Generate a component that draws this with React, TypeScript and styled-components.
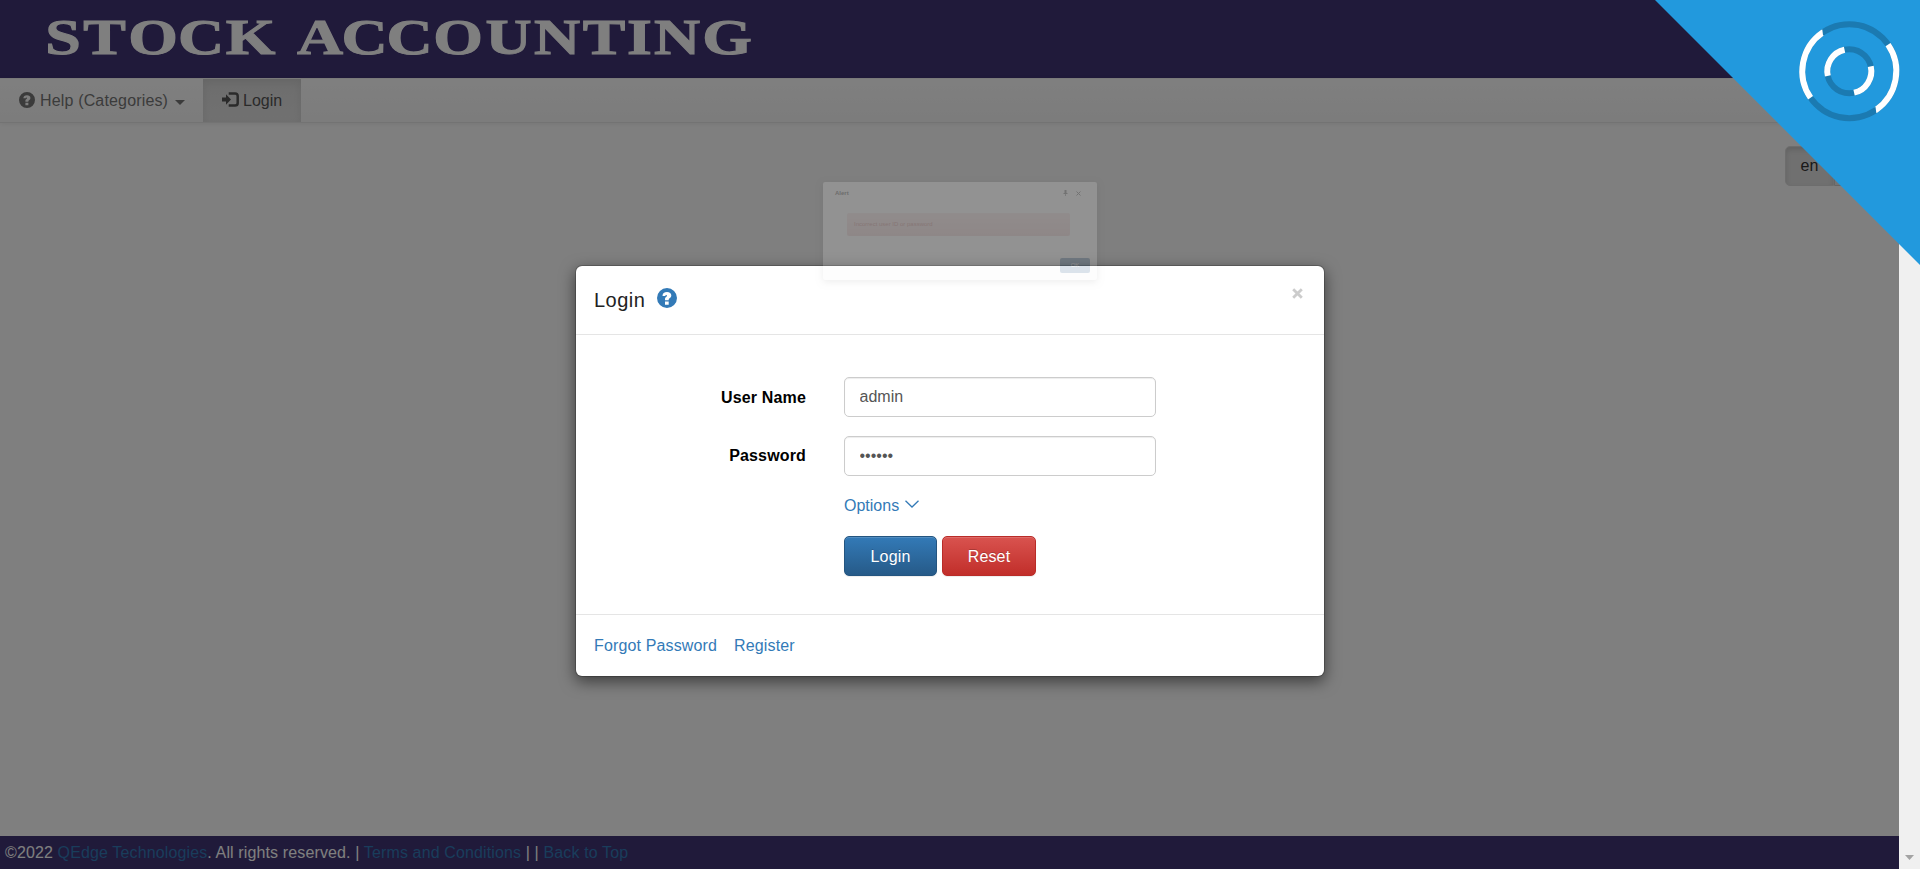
import React from "react";
import styled, { createGlobalStyle } from "styled-components";

const Global = createGlobalStyle`
  * { box-sizing: border-box; }
  html, body { margin: 0; padding: 0; overflow: hidden; }
  body {
    font-family: "Liberation Sans", Arial, Helvetica, sans-serif;
    font-size: 16px;
    line-height: 22px;
    color: #222;
    background: #fff;
  }
`;

const Screen = styled.div`
  position: relative;
  display: flex;
  width: 1920px;
  height: 869px;
  overflow: hidden;
`;

const Page = styled.div`
  position: relative;
  display: flex;
  flex-direction: column;
  width: 1899px;
  height: 869px;
  overflow: hidden;
`;

const Header = styled.header`
  height: 78px;
  background: #403474;
  svg { display: block; }
`;

const LogoText = styled.text`
  font-family: "Liberation Serif", "Times New Roman", serif;
  font-weight: bold;
  font-size: 51.5px;
  fill: #fff;
  stroke: #fff;
  stroke-width: 1px;
  text-anchor: middle;
`;

const Navbar = styled.nav`
  display: flex;
  height: 45px;
  border-top: 1px solid #f4f4f4;
  border-bottom: 1px solid #e7e7e7;
  background: linear-gradient(to bottom, #fff 0%, #f8f8f8 100%);
  box-shadow: 0 1px 5px rgba(0, 0, 0, 0.075);
`;

const NavItem = styled.a<{ $active?: boolean; $width: number }>`
  display: flex;
  align-items: center;
  width: ${(p) => p.$width}px;
  padding-left: 19px;
  color: ${(p) => (p.$active ? "#555" : "#777")};
  background: ${(p) => (p.$active ? "linear-gradient(to bottom, #dbdbdb, #e2e2e2)" : "none")};
  box-shadow: ${(p) => (p.$active ? "inset 0 3px 9px rgba(0,0,0,.075)" : "none")};
  letter-spacing: ${(p) => (p.$active ? "0" : "0.16px")};
  span { padding-top: 1px; }
  svg { margin-bottom: 2px; flex: none; }
`;

const Caret = styled.i`
  margin-left: 7px;
  margin-top: 3px;
  border: 5px solid transparent;
  border-top-color: #777;
  border-bottom: 0;
`;

const Main = styled.main`
  flex: 1;
  display: flex;
  justify-content: flex-end;
  align-items: flex-start;
  padding: 23px 16px 0 0;
`;

const ButtonGroup = styled.div`
  display: flex;
  height: 40px;
`;

const LangButton = styled.button<{ $pressed?: boolean; $width: number }>`
  width: ${(p) => p.$width}px;
  padding: 0 0 1px;
  font: inherit;
  color: #333;
  border: 1px solid ${(p) => (p.$pressed ? "#dbdbdb" : "#ccc")};
  border-radius: ${(p) => (p.$pressed ? "5px 0 0 5px" : "0 5px 5px 0")};
  background: ${(p) => (p.$pressed ? "#e0e0e0" : "#e8e8e8")};
  box-shadow: ${(p) => (p.$pressed ? "inset 0 3px 5px rgba(0,0,0,.125)" : "none")};
`;

const Footer = styled.footer`
  height: 33px;
  padding: 6px 4px 0 5px;
  background: #403474;
  color: #fff;
  white-space: pre;
  letter-spacing: 0.13px;
  a { color: #337ab7; }
`;

const Backdrop = styled.div`
  position: absolute;
  inset: 0;
  padding-top: 265px;
  background: rgba(0, 0, 0, 0.5);
`;

const Dialog = styled.section`
  display: flex;
  flex-direction: column;
  width: 750px;
  height: 412px;
  margin: 0 0 0 575px;
  border: 1px solid rgba(0, 0, 0, 0.2);
  border-radius: 7px;
  background: #fff;
  background-clip: padding-box;
  box-shadow: 0 5px 15px rgba(0, 0, 0, 0.5);
`;

const DialogHeader = styled.div`
  display: flex;
  height: 69px;
  padding: 21px 21px 0 18px;
  border-bottom: 1px solid #e5e5e5;
`;

const Title = styled.h4`
  margin: 0 12px 0 0;
  font-size: 20px;
  line-height: 26px;
  font-weight: 400;
  letter-spacing: 0.5px;
  color: #222;
`;

const HelpLink = styled.a`
  padding-top: 1px;
  line-height: 0;
`;

const Close = styled.svg`
  flex: none;
  margin: 1px 0 0 auto;
`;

const DialogBody = styled.form`
  flex: 1;
  padding-top: 42px;
`;

const Field = styled.label`
  display: flex;
  align-items: center;
  height: 40px;
  margin-bottom: 19px;
`;

const Label = styled.span<{ $drop?: number }>`
  width: 230px;
  margin-right: 38px;
  padding-top: ${(p) => p.$drop || 0}px;
  text-align: right;
  font-weight: 700;
  letter-spacing: 0.15px;
  color: #000;
`;

const Input = styled.input`
  width: 312px;
  height: 40px;
  padding: 5px 15px 5px 14.5px;
  font: inherit;
  color: #555;
  border: 1px solid #ccc;
  border-radius: 5px;
  outline: none;
  background: #fff;
  box-shadow: inset 0 1px 1px rgba(0, 0, 0, 0.075);
`;

const Options = styled.div`
  display: flex;
  align-items: center;
  height: 22px;
  margin-left: 268px;
  color: #337ab7;
  svg { margin: 0 0 4px 6px; }
`;

const Actions = styled.div`
  display: flex;
  gap: 5px;
  margin: 19px 0 0 268px;
`;

const Action = styled.button<{ $from: string; $to: string; $edge: string; $width: number }>`
  width: ${(p) => p.$width}px;
  height: 40px;
  padding: 1px 0 0;
  font: inherit;
  letter-spacing: 0.15px;
  color: #fff;
  border: 1px solid ${(p) => p.$edge};
  border-radius: 5px;
  background: linear-gradient(to bottom, ${(p) => p.$from}, ${(p) => p.$to});
  box-shadow: inset 0 1px 0 rgba(255, 255, 255, 0.15), 0 1px 1px rgba(0, 0, 0, 0.075);
  text-shadow: 0 -1px 0 rgba(0, 0, 0, 0.2);
`;

const DialogFooter = styled.div`
  display: flex;
  gap: 17px;
  height: 62px;
  padding: 20px 18px 0;
  border-top: 1px solid #e5e5e5;
  color: #337ab7;
  letter-spacing: 0.14px;
`;

const Alert = styled.div`
  position: absolute;
  left: 823px;
  top: 182px;
  display: flex;
  flex-direction: column;
  width: 274px;
  height: 98px;
  border-radius: 2px;
  background: #f3f3f3;
  opacity: 0.16;
  box-shadow: 0 2px 7px rgba(0, 0, 0, 0.4);
  font-size: 6px;
  line-height: 8px;
`;

const AlertHead = styled.div`
  display: flex;
  align-items: center;
  height: 22px;
  padding: 0 16px 0 12px;
  color: #000;
  gap: 8px;
  b { margin-right: auto; font-weight: 700; }
`;

const AlertMessage = styled.div`
  height: 23px;
  margin: 9px 27px 0 24px;
  padding: 7px;
  border-radius: 2px;
  background: linear-gradient(to bottom, #ecd0d0, #dfb2b2);
  color: #a94442;
`;

const AlertOk = styled.div`
  width: 30px;
  height: 15px;
  margin: 22px 7px 0 auto;
  border-radius: 2px;
  background: #265a88;
  color: #fff;
  text-align: center;
  line-height: 15px;
`;

const Scrollbar = styled.div`
  display: flex;
  justify-content: center;
  align-items: flex-end;
  width: 21px;
  padding-bottom: 9px;
  background: #f0f0f0;
`;

const Corner = styled.svg`
  position: absolute;
  top: 0;
  right: 0;
`;

const HelpIcon = ({ size, color, gap }: { size: number; color: string; gap: number }) => (
  <svg width={size} height={size} viewBox="0 0 20 20" style={{ marginRight: gap }}>
    <path
      fill={color}
      fillRule="evenodd"
      d="M10 0a10 10 0 1 0 0 20a10 10 0 0 0 0-20zM8 13.500h3.700v3.200h-3.700zM8 12.300v-1.600c0-1.600 2-1.800 2-3c0-.5-.3-.8-.8-.8c-.6 0-.8.4-.8 1H5.500c0-2.500 1.700-3.900 4.500-3.900c2.600 0 4.300 1.300 4.300 3.500c0 2.500-2.600 2.700-2.600 4.200v.6z"
    />
  </svg>
);

const LoginIcon = () => (
  <svg width="17" height="15" viewBox="0 0 17 15" style={{ marginRight: 4 }}>
    <path fill="#555" d="M0 5.500h4V2.200L9 7.500L4 12.800V9.500H0z" />
    <path fill="none" stroke="#555" strokeWidth="2.500" d="M6.700 1.400H13Q15.700 1.400 15.700 4V11Q15.700 13.600 13 13.600H6.700" />
  </svg>
);

// Centre of each letter of the wordmark, before the horizontal stretch.
const STRETCH = 1.24;
const letterX = [63, 104.5, 153, 201, 250.5, 286, 320, 364.5, 409.5, 458, 508.5, 557, 604, 639.5, 677, 727]
  .map((x) => (x / STRETCH).toFixed(1))
  .join(" ");

export default function App() {
  return (
    <Screen>
      <Global />
      <Page>
        <Header>
          <svg width="800" height="78">
            <LogoText x={letterX} y="54.500" transform={`scale(${STRETCH} 1)`}>STOCK ACCOUNTING</LogoText>
          </svg>
        </Header>
        <Navbar>
          <NavItem $width={203}>
            <HelpIcon size={16} color="#777" gap={5} />
            <span>Help (Categories)</span>
            <Caret />
          </NavItem>
          <NavItem $width={98} $active>
            <LoginIcon />
            <span>Login</span>
          </NavItem>
        </Navbar>
        <Main>
          <ButtonGroup>
            <LangButton $width={49} $pressed>en</LangButton>
            <LangButton $width={49}>▾</LangButton>
          </ButtonGroup>
        </Main>
        <Footer>
          ©2022 <a>QEdge Technologies</a>. All rights reserved. | <a>Terms and Conditions</a> | | <a>Back to Top</a>
        </Footer>
        <Backdrop>
          <Dialog>
            <DialogHeader>
              <Title>Login</Title>
              <HelpLink>
                <HelpIcon size={20} color="#337ab7" gap={0} />
              </HelpLink>
              <Close width="11" height="11" viewBox="0 0 11 11">
                <path d="M1.200 1.200L9.800 9.800M9.800 1.200L1.200 9.800" stroke="#ccc" strokeWidth="2.800" />
              </Close>
            </DialogHeader>
            <DialogBody>
              <Field>
                <Label $drop={2}>User Name</Label>
                <Input defaultValue="admin" />
              </Field>
              <Field>
                <Label>Password</Label>
                <Input type="password" defaultValue="master" />
              </Field>
              <Options>
                Options
                <svg width="14" height="8" viewBox="0 0 14 8">
                  <path d="M.5 .7L7 7L13.500 .7" fill="none" stroke="#337ab7" strokeWidth="1.300" />
                </svg>
              </Options>
              <Actions>
                <Action type="button" $width={93} $from="#337ab7" $to="#265a88" $edge="#245580">Login</Action>
                <Action type="button" $width={94} $from="#d9534f" $to="#c12e2a" $edge="#b92c28">Reset</Action>
              </Actions>
            </DialogBody>
            <DialogFooter>
              <a>Forgot Password</a>
              <a>Register</a>
            </DialogFooter>
          </Dialog>
        </Backdrop>
        <Alert>
          <AlertHead>
            <b>Alert</b>
            <svg width="5" height="6" viewBox="0 0 5 6">
              <path d="M1.500 0h2v3h1v1h-4v-1h1zM2.200 4h.7v2h-.7z" fill="#333" />
            </svg>
            <svg width="5" height="5" viewBox="0 0 5 5">
              <path d="M.5 .5l4 4m0-4l-4 4" stroke="#333" strokeWidth="1" />
            </svg>
          </AlertHead>
          <AlertMessage>Incorrect user ID or password</AlertMessage>
          <AlertOk>OK</AlertOk>
        </Alert>
      </Page>
      <Scrollbar>
        <svg width="9" height="5" viewBox="0 0 9 5">
          <path d="M0 0H9L4.500 5z" fill="#a3a3a3" />
        </svg>
      </Scrollbar>
      <Corner width="265" height="265" viewBox="0 0 265 265">
        <path d="M0 0H265V265z" fill="#2299dd" />
        <g fill="none" strokeWidth="6" transform="translate(194.300 71.200)">
          <circle r="47" stroke="#1b7ab1" />
          <circle r="22" stroke="#1b7ab1" />
          <circle r="47" stroke="#fff" pathLength="360" strokeDasharray="90 90" transform="rotate(-34.500)" />
          <circle r="22" stroke="#fff" pathLength="360" strokeDasharray="90 90" transform="rotate(-12.500)" />
        </g>
      </Corner>
    </Screen>
  );
}
